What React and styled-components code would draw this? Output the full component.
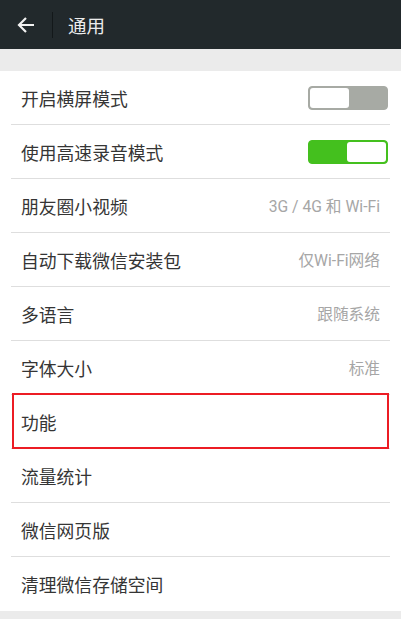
import React from 'react'
import styled, { createGlobalStyle } from 'styled-components'

const GlobalStyle = createGlobalStyle`
   html, body { margin: 0; padding: 0; }
   body {
      background: #ebebeb;
      font-family: Roboto, "Noto Sans CJK SC", sans-serif;
   }
`

const Page = styled.div`
   width: 401px;
   height: 619px;
   background: #ebebeb;
   overflow: hidden;
`

const Header = styled.div`
   height: 49px;
   background: #22292c;
   display: flex;
   align-items: center;
`

const BackButton = styled.div`
   width: 52px;
   height: 49px;
   display: flex;
   align-items: center;
   justify-content: center;
`

const Separator = styled.div`
   width: 1px;
   height: 26px;
   background: #13181a;
`

const Title = styled.div`
   margin-left: 15px;
   color: #ececec;
   font-size: 18.5px;
   font-family: "Noto Sans CJK SC", sans-serif;
`

const List = styled.div`
   margin-top: 22px;
   background: #fff;
`

const Row = styled.div`
   height: 54px;
   margin: 0 11px;
   display: flex;
   align-items: center;
   justify-content: space-between;
   box-sizing: border-box;
   border-bottom: ${p => (p.last ? 'none' : '1px solid #dedede')};
   position: relative;
`

const Label = styled.div`
   padding-left: 10px;
   font-size: 17.8px;
   color: #353535;
   font-family: "Noto Sans CJK SC", sans-serif;
`

const Value = styled.div`
   padding-right: 10px;
   font-size: 15.7px;
   color: #a6a6a6;
   font-family: Roboto, "Noto Sans CJK SC", sans-serif;
`

const Highlight = styled.div`
   position: absolute;
   left: 1px;
   right: 1px;
   top: -2px;
   bottom: -1px;
   border: 2px solid #ec1c24;
   pointer-events: none;
`

const Toggle = styled.div`
   width: 80px;
   height: 24px;
   margin-right: 2px;
   box-sizing: border-box;
   border-radius: 4px;
   border: 1px solid ${p => (p.on ? '#44c01e' : '#a7aaa4')};
   background: ${p => (p.on ? '#44c01e' : '#a7aaa4')};
   display: flex;
   justify-content: ${p => (p.on ? 'flex-end' : 'flex-start')};
   padding: 1px;
`

const Knob = styled.div`
   width: 39px;
   height: 100%;
   background: #fff;
   border-radius: 3px;
`

const rows = [
   { label: '开启横屏模式', toggle: false },
   { label: '使用高速录音模式', toggle: true },
   { label: '朋友圈小视频', value: '3G / 4G 和 Wi-Fi' },
   { label: '自动下载微信安装包', value: '仅Wi-Fi网络' },
   { label: '多语言', value: '跟随系统' },
   { label: '字体大小', value: '标准' },
   { label: '功能', highlight: true },
   { label: '流量统计' },
   { label: '微信网页版' },
   { label: '清理微信存储空间' },
]

function App() {
   return (
      <Page>
         <GlobalStyle />
         <Header>
            <BackButton>
               <svg width="20" height="18" viewBox="0 0 20 18">
                  <path d="M18 9H3M10 2L3 9l7 7" fill="none" stroke="#f2f2f2" strokeWidth="2.2" />
               </svg>
            </BackButton>
            <Separator />
            <Title>通用</Title>
         </Header>
         <List>
            {rows.map((r, i) => (
               <Row key={r.label} last={i === rows.length - 1}>
                  <Label>{r.label}</Label>
                  {r.value && <Value>{r.value}</Value>}
                  {r.toggle !== undefined && (
                     <Toggle on={r.toggle}>
                        <Knob />
                     </Toggle>
                  )}
                  {r.highlight && <Highlight />}
               </Row>
            ))}
         </List>
      </Page>
   )
}

export default App
